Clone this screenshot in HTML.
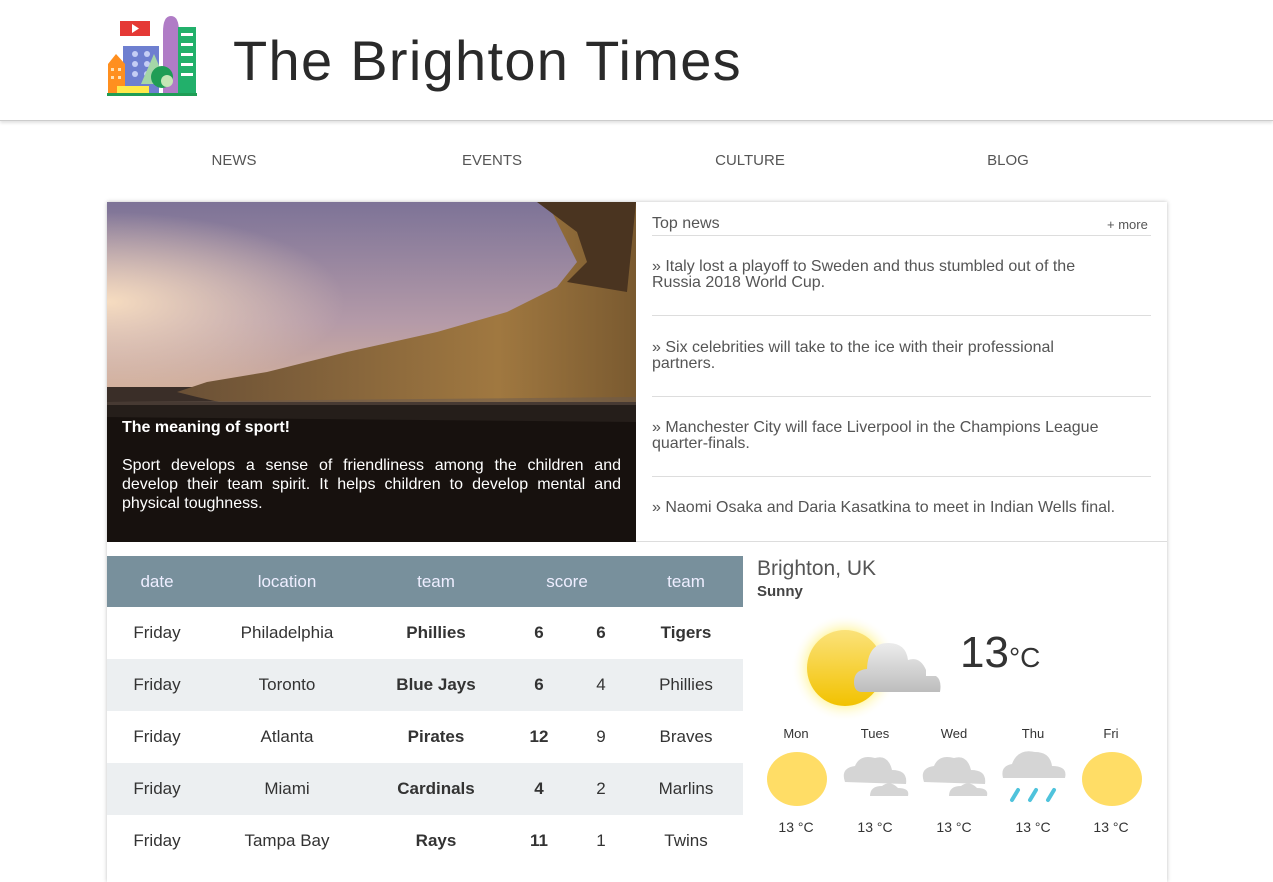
<!DOCTYPE html>
<html><head><meta charset="utf-8"><style>
*{margin:0;padding:0;box-sizing:border-box}
body{width:1273px;height:867px;overflow:hidden;background:#fff;font-family:"Liberation Sans",sans-serif;color:#444;position:relative}
.a{position:absolute}
.hdr{left:0;top:0;width:1273px;height:121px;border-bottom:1px solid #ccc;box-shadow:0 2px 3px rgba(0,0,0,.12)}
.title{left:233px;top:28px;font-size:56px;color:#2a2a2a;letter-spacing:1.3px;white-space:nowrap}
.nav{top:152px;font-size:15px;color:#555;width:120px;text-align:center}
.card{left:107px;top:202px;width:1060px;height:680px;box-shadow:0 0 4px rgba(0,0,0,.25);background:#fff}
.img{left:107px;top:202px;width:529px;height:340px;overflow:hidden;background:#8a7f9a}
.cap{left:0;top:203px;width:529px;height:137px;background:rgba(15,12,10,.6);color:#fff}
.news{left:652px;width:499px;font-size:16px;color:#555;line-height:16px}
.hr{left:652px;width:499px;height:1px;background:#ddd}
.th{top:556px;left:107px;width:636px;height:51px;background:#78909c}
.c{position:absolute;text-align:center;font-size:17px;color:#333}
.row{left:107px;width:636px;height:52px}
.day{font-size:13px;color:#333;text-align:center;width:70px}
.tmp{font-size:14px;color:#333;text-align:center;width:70px}
</style></head><body>
<div class="a hdr"></div>
<svg class="a" style="left:107px;top:14px" width="90" height="82" viewBox="0 0 90 82">
<rect x="13" y="7" width="30" height="15" fill="#e53935"/><polygon points="25,10 25,19 32,14.5" fill="#fff"/>
<rect x="16" y="32" width="36" height="48" fill="#6e7fd0"/>
<g fill="#c5cef5"><circle cx="28" cy="40" r="3"/><circle cx="40" cy="40" r="3"/><circle cx="28" cy="50" r="3"/><circle cx="40" cy="50" r="3"/><circle cx="28" cy="60" r="3"/><circle cx="40" cy="60" r="3"/></g>
<path d="M56 18 Q56 2 64 2 Q72 2 72 18 L72 80 L56 80Z" fill="#b07cc6"/>
<rect x="71" y="13" width="18" height="67" fill="#22b06b"/>
<g fill="#fff"><rect x="74" y="19" width="12" height="3"/><rect x="74" y="29" width="12" height="3"/><rect x="74" y="39" width="12" height="3"/><rect x="74" y="49" width="12" height="3"/><rect x="74" y="59" width="12" height="3"/></g>
<path d="M1 50 L9 40 L18 50 L18 80 L1 80Z" fill="#ff8f1f"/>
<g fill="#ffe0b2"><rect x="4" y="54" width="3" height="3"/><rect x="11" y="54" width="3" height="3"/><rect x="4" y="62" width="3" height="3"/><rect x="11" y="62" width="3" height="3"/></g>
<rect x="10" y="72" width="32" height="8" fill="#ffe94a"/>
<polygon points="47,40 34,70 60,70" fill="#a5d6a7"/>
<circle cx="55" cy="63" r="11" fill="#1f9d55"/><circle cx="60" cy="67" r="6" fill="#c5e6b5"/>
<rect x="0" y="79" width="90" height="3" fill="#1f9d55"/>
</svg>
<div class="a title">The Brighton Times</div>
<div class="a nav" style="left:174px">NEWS</div>
<div class="a nav" style="left:432px">EVENTS</div>
<div class="a nav" style="left:690px">CULTURE</div>
<div class="a nav" style="left:948px">BLOG</div>
<div class="a card"></div>
<div class="a img">
<svg class="a" style="left:0;top:0" width="529" height="340"><defs>
<linearGradient id="sky" x1="0" y1="0" x2="0" y2="1"><stop offset="0" stop-color="#7d7397"/><stop offset=".6" stop-color="#b49aa8"/><stop offset="1" stop-color="#d8b49a"/></linearGradient>
<radialGradient id="g" cx="0" cy="0.5" r="0.45"><stop offset="0" stop-color="#f6dcc0"/><stop offset="1" stop-color="#f6dcc0" stop-opacity="0"/></radialGradient>
<linearGradient id="cl" x1="0" y1="0" x2="1" y2="0"><stop offset="0" stop-color="#6a5036"/><stop offset=".7" stop-color="#a07840"/><stop offset="1" stop-color="#7a5a30"/></linearGradient></defs>
<rect width="529" height="200" fill="url(#sky)"/><rect width="529" height="200" fill="url(#g)"/>
<rect y="185" width="529" height="155" fill="#3a2e28"/>
<path d="M70 190 L100 180 L160 170 L240 150 L330 130 L400 110 L450 85 L470 60 L455 30 L440 0 L529 0 L529 260 L200 220 L90 195Z" fill="url(#cl)"/>
<path d="M430 0 L470 30 L480 60 L460 80 L520 90 L529 0Z" fill="#4a3420"/>
<rect y="200" width="529" height="140" fill="#241b16"/>
<path d="M0 200 L529 195 L529 220 L0 215Z" fill="#6a5a50" opacity=".5"/></svg>
<div class="a cap"><div class="a" style="left:15px;top:14px;font-size:16px;font-weight:bold">The meaning of sport!</div>
<div class="a" style="left:15px;top:51px;width:499px;font-size:16px;line-height:19px;text-align:justify">Sport develops a sense of friendliness among the children and develop their team spirit. It helps children to develop mental and physical toughness.</div></div>
</div>
<div class="a" style="left:652px;top:215px;font-size:16px;color:#555">Top news</div>
<div class="a" style="left:1107px;top:217px;font-size:13px;color:#555">+ more</div>
<div class="a hr" style="top:235px"></div>
<div class="a news" style="top:259px">» Italy lost a playoff to Sweden and thus stumbled out of the<br>Russia 2018 World Cup.</div>
<div class="a hr" style="top:315px"></div>
<div class="a news" style="top:340px">» Six celebrities will take to the ice with their professional<br>partners.</div>
<div class="a hr" style="top:396px"></div>
<div class="a news" style="top:420px">» Manchester City will face Liverpool in the Champions League<br>quarter-finals.</div>
<div class="a hr" style="top:476px"></div>
<div class="a news" style="top:500px">» Naomi Osaka and Daria Kasatkina to meet in Indian Wells final.</div>
<div class="a" style="left:636px;top:541px;width:531px;height:1px;background:#ddd"></div>
<div class="a th">
<div class="c" style="left:10px;width:80px;top:16px;color:#eef">date</div>
<div class="c" style="left:120px;width:120px;top:16px;color:#eef">location</div>
<div class="c" style="left:279px;width:100px;top:16px;color:#eef">team</div>
<div class="c" style="left:410px;width:100px;top:16px;color:#eef">score</div>
<div class="c" style="left:529px;width:100px;top:16px;color:#eef">team</div>
</div>
<div class="a row" style="top:607px;background:#fff">
<div class="c" style="left:10px;width:80px;top:16px">Friday</div><div class="c" style="left:110px;width:140px;top:16px">Philadelphia</div><div class="c" style="left:279px;width:100px;top:16px;font-weight:bold">Phillies</div><div class="c" style="left:412px;width:40px;top:16px;font-weight:bold">6</div><div class="c" style="left:474px;width:40px;top:16px;font-weight:bold">6</div><div class="c" style="left:529px;width:100px;top:16px;font-weight:bold">Tigers</div></div>
<div class="a row" style="top:659px;background:#eceff1">
<div class="c" style="left:10px;width:80px;top:16px">Friday</div><div class="c" style="left:110px;width:140px;top:16px">Toronto</div><div class="c" style="left:279px;width:100px;top:16px;font-weight:bold">Blue Jays</div><div class="c" style="left:412px;width:40px;top:16px;font-weight:bold">6</div><div class="c" style="left:474px;width:40px;top:16px">4</div><div class="c" style="left:529px;width:100px;top:16px">Phillies</div></div>
<div class="a row" style="top:711px;background:#fff">
<div class="c" style="left:10px;width:80px;top:16px">Friday</div><div class="c" style="left:110px;width:140px;top:16px">Atlanta</div><div class="c" style="left:279px;width:100px;top:16px;font-weight:bold">Pirates</div><div class="c" style="left:412px;width:40px;top:16px;font-weight:bold">12</div><div class="c" style="left:474px;width:40px;top:16px">9</div><div class="c" style="left:529px;width:100px;top:16px">Braves</div></div>
<div class="a row" style="top:763px;background:#eceff1">
<div class="c" style="left:10px;width:80px;top:16px">Friday</div><div class="c" style="left:110px;width:140px;top:16px">Miami</div><div class="c" style="left:279px;width:100px;top:16px;font-weight:bold">Cardinals</div><div class="c" style="left:412px;width:40px;top:16px;font-weight:bold">4</div><div class="c" style="left:474px;width:40px;top:16px">2</div><div class="c" style="left:529px;width:100px;top:16px">Marlins</div></div>
<div class="a row" style="top:815px;background:#fff">
<div class="c" style="left:10px;width:80px;top:16px">Friday</div><div class="c" style="left:110px;width:140px;top:16px">Tampa Bay</div><div class="c" style="left:279px;width:100px;top:16px;font-weight:bold">Rays</div><div class="c" style="left:412px;width:40px;top:16px;font-weight:bold">11</div><div class="c" style="left:474px;width:40px;top:16px">1</div><div class="c" style="left:529px;width:100px;top:16px">Twins</div></div>

<div class="a" style="left:757px;top:557px;font-size:21px;color:#555">Brighton, UK</div>
<div class="a" style="left:757px;top:583px;font-size:15px;font-weight:bold;color:#444">Sunny</div>
<svg class="a" style="left:780px;top:610px" width="170" height="110">
<defs><radialGradient id="glow"><stop offset=".65" stop-color="#fff59d"/><stop offset="1" stop-color="#fff" stop-opacity="0"/></radialGradient>
<linearGradient id="sun" x1="0" y1="0" x2="0" y2="1"><stop offset="0" stop-color="#fbe27a"/><stop offset="1" stop-color="#f2c200"/></linearGradient>
<linearGradient id="cg" x1="0" y1="0" x2="0" y2="1"><stop offset="0" stop-color="#ececec"/><stop offset="1" stop-color="#bdbdbd"/></linearGradient></defs>
<circle cx="65" cy="58" r="54" fill="url(#glow)"/>
<circle cx="65" cy="58" r="38" fill="url(#sun)"/>
<path d="M82 82 Q74 82 74 72 Q74 60 87 59 Q88 33 108 33 Q126 33 128 50 Q140 46 146 60 L146 66 L156 66 Q162 70 160 82Z" fill="url(#cg)"/>
</svg>
<div class="a" style="left:960px;top:628px;font-size:44px;color:#333">13<span style="font-size:28px">°C</span></div>
<div class="a day" style="left:761px;top:726px">Mon</div>
<div class="a day" style="left:840px;top:726px">Tues</div>
<div class="a day" style="left:919px;top:726px">Wed</div>
<div class="a day" style="left:998px;top:726px">Thu</div>
<div class="a day" style="left:1076px;top:726px">Fri</div>
<svg class="a" style="left:760px;top:748px" width="400" height="60">
<ellipse cx="37" cy="31" rx="30" ry="27" fill="#ffdd66"/>
<ellipse cx="352" cy="31" rx="30" ry="27" fill="#ffdd66"/>
<g fill="#d5d5d5"><path d="M85 34 Q80 20 95 18 Q100 6 115 10 Q128 6 132 22 Q148 22 146 36Z"/><path d="M110 48 Q110 38 122 38 Q130 32 138 40 Q150 40 148 48Z"/>
<path d="M164 34 Q159 20 174 18 Q179 6 194 10 Q207 6 211 22 Q227 22 225 36Z"/><path d="M189 48 Q189 38 201 38 Q209 32 217 40 Q229 40 227 48Z"/>
<path d="M243 30 Q240 18 252 16 Q258 0 275 4 Q290 4 292 18 Q308 18 305 30Z"/></g>
<g stroke="#4fc3dc" stroke-width="4" stroke-linecap="round"><line x1="252" y1="52" x2="258" y2="42"/><line x1="270" y1="52" x2="276" y2="42"/><line x1="288" y1="52" x2="294" y2="42"/></g>
</svg>
<div class="a tmp" style="left:761px;top:819px">13 °C</div>
<div class="a tmp" style="left:840px;top:819px">13 °C</div>
<div class="a tmp" style="left:919px;top:819px">13 °C</div>
<div class="a tmp" style="left:998px;top:819px">13 °C</div>
<div class="a tmp" style="left:1076px;top:819px">13 °C</div>
</body></html>
